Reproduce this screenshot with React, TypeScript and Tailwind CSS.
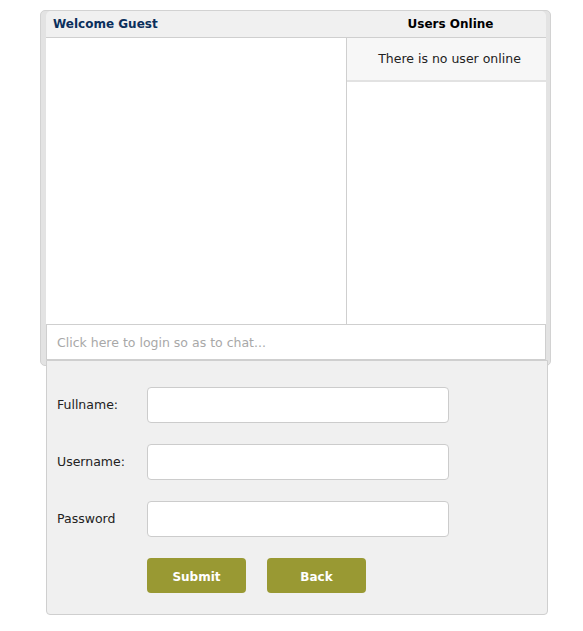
import React from "react";

export default function App() {
    const font = { fontFamily: "'DejaVu Sans', Tahoma, sans-serif" };

    const handleSubmit = (e: any) => {
        e.preventDefault();
        return;
    }

    return (
        <div className="w-[583px] h-[631px] bg-white text-[12.5px] text-[#222]" style={font}>
            <div className="pt-[10px] pl-[40px]">
                {/* chat box */}
                <div className="w-[511px] border border-[#d2d2d2] rounded-[5px] bg-[#e3e3e3] pl-[5px] pr-[4px] pb-[5px]">
                    <div className="flex h-[26px] items-end pb-[4px] bg-[#f0f0f0] rounded-t-[5px] text-[12px]">
                        <div className="w-[301px] pl-[7px] font-bold text-[#0b2f5c]">Welcome Guest</div>
                        <div className="flex-1 text-center font-bold text-black pl-[8px]">Users Online</div>
                    </div>
                    <div className="flex h-[287px] border-t border-[#cfcfcf] bg-white">
                        <div className="w-[301px] border-r border-[#cfcfcf]"></div>
                        <div className="flex-1 flex flex-col">
                            <div className="h-[44px] bg-[#f7f7f7] border-b-2 border-[#e2e2e2] flex items-center justify-center text-[#222] pl-[6px]">
                                There is no user online
                            </div>
                        </div>
                    </div>
                    <input
                        type="text"
                        placeholder="Click here to login so as to chat..."
                        className="block w-[500px] h-[36px] border border-[#cfcfcf] bg-white px-[10px] text-[12.5px] placeholder:text-[#a8a8a8] outline-none"
                        style={font}
                    />
                </div>

                {/* login form */}
                <form
                    onSubmit={handleSubmit}
                    className="ml-[6px] -mt-[6px] relative w-[502px] h-[255px] bg-[#f0f0f0] border border-[#cfcfcf] rounded-b-[4px] pt-[26px] pl-[10px]">
                    <div className="flex flex-col gap-[21px]">
                        <div className="flex items-center">
                            <label className="w-[90px]">Fullname:</label>
                            <input type="text" className="w-[302px] h-[36px] bg-white border border-[#cccccc] rounded-[4px] outline-none" />
                        </div>
                        <div className="flex items-center">
                            <label className="w-[90px]">Username:</label>
                            <input type="text" className="w-[302px] h-[36px] bg-white border border-[#cccccc] rounded-[4px] outline-none" />
                        </div>
                        <div className="flex items-center">
                            <label className="w-[90px]">Password</label>
                            <input type="password" className="w-[302px] h-[36px] bg-white border border-[#cccccc] rounded-[4px] outline-none" />
                        </div>
                        <div className="flex gap-[21px] pl-[90px] text-[12px]">
                            <button className="w-[99px] h-[35px] pt-[2px] bg-[#999933] text-white font-bold rounded-[4px]">Submit</button>
                            <button type="button" className="w-[99px] h-[35px] pt-[2px] bg-[#999933] text-white font-bold rounded-[4px]">Back</button>
                        </div>
                    </div>
                </form>
            </div>
        </div>
    )
}
